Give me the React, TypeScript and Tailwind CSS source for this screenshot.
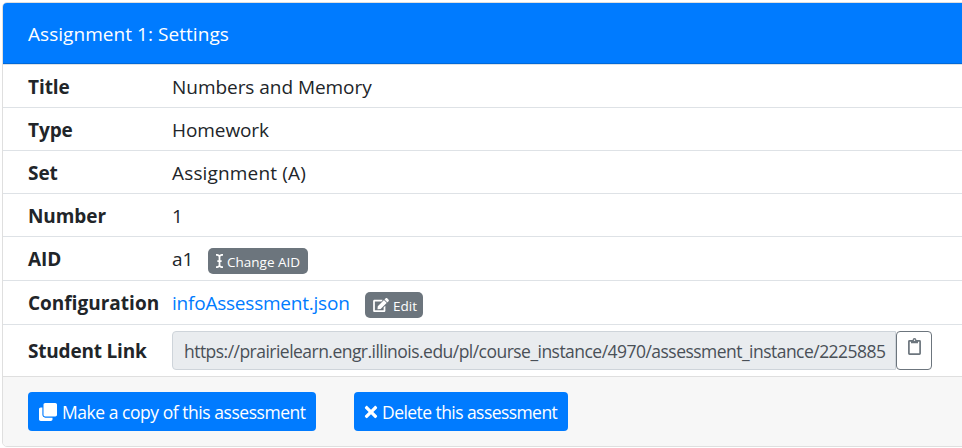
import type { ReactNode } from "react";
import { FaClone, FaEdit, FaICursor, FaTimes } from "react-icons/fa";

function ClipboardIcon() {
  return (
    <svg viewBox="0 0 13 17" className="h-[17px] w-[13px] shrink-0" fill="none">
      <rect x="0.9" y="2.9" width="11.2" height="13.2" rx="0.6" stroke="currentColor" strokeWidth="1.7" />
      <path d="M3 2h1.6a1.9 1.9 0 0 1 3.8 0H10v3.2H3z" fill="currentColor" />
      <circle cx="6.5" cy="2.2" r="0.7" fill="white" />
    </svg>
  );
}

function Row({ label, labelClass, height, children }: { label: string; labelClass: string; height: string; children: ReactNode }) {
  return (
    <div className={`flex border-t border-[#dee2e6] pl-[25px] ${height}`}>
      <div className={`w-36 shrink-0 font-bold ${labelClass}`}>{label}</div>
      {children}
    </div>
  );
}

export default function App() {
  return (
    <div className="h-[448px] w-[962px] overflow-hidden bg-white pt-[2px] pl-[2px] font-['Open_Sans','Noto_Sans',sans-serif] text-[19px] leading-[26px] tracking-[-0.08px] whitespace-nowrap text-[#212529]">
      <div className="h-[445px] w-[980px] overflow-hidden rounded-[5px] border border-[#dfdfdf]">
        <div className="h-[61px] border-b border-[#0069d9] bg-[#007bff] pt-[18px] pl-[25px] tracking-[0.05px] text-white">
          <span>Assignment 1: Settings</span>
        </div>
        <Row label="Title" labelClass="pt-[9px]" height="h-[43px]"><div className="pt-[9px] tracking-[-0.04px]">Numbers and Memory</div></Row>
        <Row label="Type" labelClass="pt-[9px]" height="h-[43px]"><div className="pt-[9px]">Homework</div></Row>
        <Row label="Set" labelClass="pt-[9px]" height="h-[43px]"><div className="pt-[9px] tracking-[0.16px]">Assignment (A)</div></Row>
        <Row label="Number" labelClass="pt-[9px]" height="h-[43px]"><div className="pt-[9px]">1</div></Row>
        <Row label="AID" labelClass="pt-[9px]" height="h-[44px]">
          <div className="w-9 pt-[9px]">a1</div>
          <button className="mt-[11px] flex h-[26px] w-[100px] items-center rounded-[5px] bg-[#6c757d] pl-2 text-[13.5px] tracking-normal text-white">
            <FaICursor className="mr-[4px] h-[14px] w-[7px] shrink-0" /><span className="pt-px">Change AID</span>
          </button>
        </Row>
        <Row label="Configuration" labelClass="pt-[9px] tracking-normal" height="h-[44px]">
          <div className="w-[193px] pt-[9px] tracking-[-0.22px] text-[#007bff]">infoAssessment.json</div>
          <button className="mt-[11px] flex h-[26px] w-[58px] items-center rounded-[5px] bg-[#6c757d] pl-2 text-[13.5px] tracking-normal text-white">
            <FaEdit className="mr-[4px] h-[14px] w-4 shrink-0" /><span className="pt-px">Edit</span>
          </button>
        </Row>
        <Row label="Student Link" labelClass="pt-[13px] tracking-[-0.2px]" height="h-[52px]">
          <div className="mt-[6px] h-[39px] w-[724px] rounded-l-[4px] border border-[#ced4da] bg-[#e9ecef] pt-[6px] pl-[11px] text-[17.5px] tracking-[-0.53px] text-[#495057]">
            https://prairielearn.engr.illinois.edu/pl/course_instance/4970/assessment_instance/2225885
          </div>
          <button className="mt-[6px] flex h-[39px] w-[36px] rounded-[4px] border border-[#6c757d] pt-[6px] pl-[11px] text-[#6c757d]">
            <ClipboardIcon />
          </button>
        </Row>
        <div className="flex h-[70px] gap-[38px] border-t border-[#dfdfdf] bg-[#f7f7f7] pt-[15px] pl-[25px] text-[17.5px] text-white">
          <button className="flex h-[39px] w-[288px] items-center rounded-[4px] bg-[#007bff] pl-[11px] tracking-[-0.46px]">
            <FaClone className="mr-[5px] h-[18px] w-[18px] shrink-0" /><span className="pt-px">Make a copy of this assessment</span>
          </button>
          <button className="flex h-[39px] w-[214px] items-center rounded-[4px] bg-[#007bff] pl-[10px] tracking-[-0.56px]">
            <FaTimes className="mr-[4px] h-[18px] w-[14px] shrink-0" /><span className="pt-px">Delete this assessment</span>
          </button>
        </div>
      </div>
    </div>
  );
}
